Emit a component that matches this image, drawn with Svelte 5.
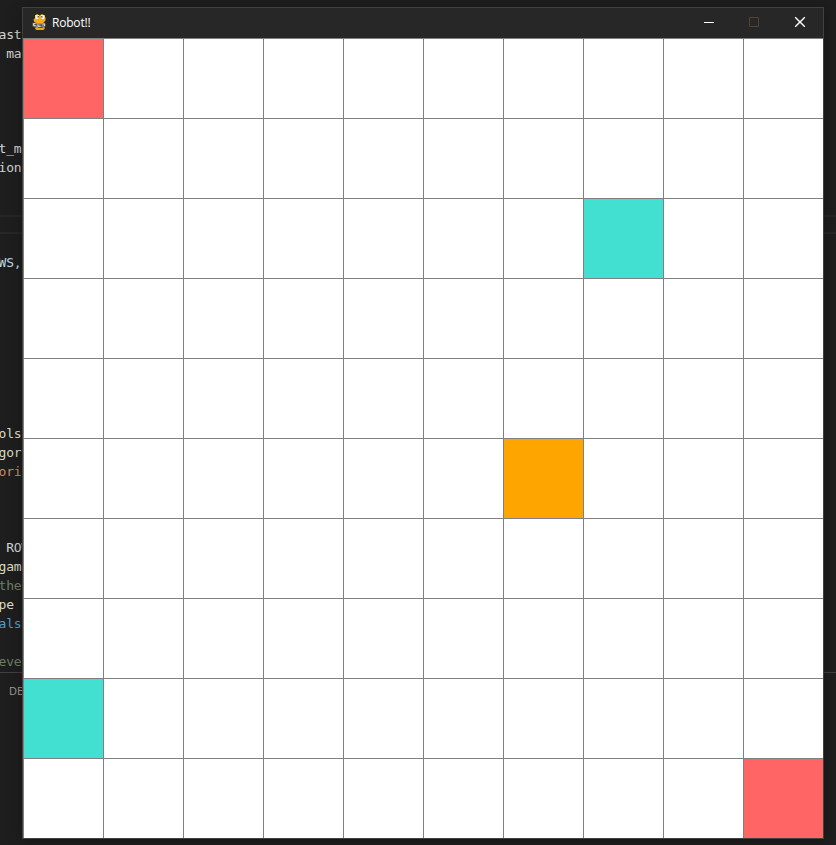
<script>
  const size = 10;
  const colors = { '0,0': '#ff6565', '9,9': '#ff6565', '2,7': '#41e0d0', '8,0': '#41e0d0', '5,6': '#ffa500' };
  const cells = Array.from({ length: size * size }, (_, i) => {
    const key = `${Math.floor(i / size)},${i % size}`;
    return { key, color: colors[key] ?? '#ffffff' };
  });
  const code = Array.from({ length: 34 }, () => ['', '']);
  const put = (row, text, kind = 'plain') => (code[row] = [text, kind]);
  put(0, 'ast');
  put(1, ' ma');
  put(6, 't_m');
  put(7, 'ion');
  put(12, 'WS,', 'name');
  put(21, 'ols', 'func');
  put(22, 'gor', 'func');
  put(23, 'ori', 'string');
  put(27, ' ROW');
  put(28, 'gam', 'func');
  put(29, 'the', 'comment');
  put(30, 'pe ', 'func');
  put(31, 'als', 'keyword');
  put(33, 'eve', 'comment');
</script>

<main class="desktop">
  <div class="band"></div>
  <div class="panel"><span>DE</span></div>
  <div class="code">
    {#each code as [text, kind]}
      <div class="line {kind}">{text}</div>
    {/each}
  </div>
  <section class="window">
    <header>
      <svg class="logo" width="16" height="17" viewBox="0 0 16 17">
        <path d="M3 8.500L0.500 9V12L3 13.500H12L13.500 12V9.500L11 8Z" fill="#7b7c74" />
        <path d="M3 1.500L5 0L7.500 1.500L10 0L12.500 1.500L13.500 4L13.500 6.500L11.500 8.500L10 9.500H5L2 7.500L1.500 5.500L3 4Z" fill="#f8ae14" />
        <path d="M3 14L5 13L7 14H10L12 13L13 14L11.500 16H4Z" fill="#eaa51a" />
        <path d="M3.500 1H7V4L6 5H4L3.500 4ZM9 1H12.500V4L12 5H10L9 4Z" fill="#eceee8" />
        <path d="M5.500 2H7V3.500H5.500ZM9 2h1.500v1.500H9z" fill="#62655e" />
        <path d="M3.500 9.500H1.500V11.500H3.500M6 10.500V12.500H8.500M10.500 10H12.500V12" fill="none" stroke="#cfd0c8" />
        <path d="M3 10h2v1H3zM8.500 10.500H10V12H8.500z" fill="#4c4e48" />
      </svg>
      <span class="title">Robot!!</span>
      <div class="controls">
        <svg width="46" height="30" viewBox="0 0 46 30" shape-rendering="crispEdges"><path d="M19 14h10v1H19z" fill="#fff" /></svg>
        <svg width="46" height="30" viewBox="0 0 46 30"><path d="M18.500 9.500h9v9h-9z" fill="none" stroke="#524334" /></svg>
        <svg width="46" height="30" viewBox="0 0 46 30"><path d="M18.200 9.200l9.600 9.600M27.800 9.200l-9.600 9.600" fill="none" stroke="#fff" stroke-width="1.400" /></svg>
      </div>
    </header>
    <div class="grid">
      {#each cells as cell (cell.key)}
        <div class="cell" style="background-color: {cell.color}"></div>
      {/each}
    </div>
  </section>
</main>

<style>
  :global(body) { margin: 0; background: #1e1e1e; }
  .desktop {
    position: relative;
    box-sizing: border-box;
    width: 836px;
    height: 845px;
    padding: 7px 0 0 22px;
    overflow: hidden;
    background: #1e1e1e;
  }
  .band {
    position: absolute;
    top: 215px;
    left: 0;
    width: 100%;
    height: 15px;
    border-top: 2px solid #282727;
    border-bottom: 2px solid #282727;
  }
  .panel {
    position: absolute;
    top: 672px;
    left: 0;
    width: 100%;
    height: 172px;
    border-top: 1px solid #414141;
    border-bottom: 1px solid #171012;
    font: 11px/35px 'Open Sans', sans-serif;
    color: #a39e9a;
  }
  .panel span { padding-left: 9px; }
  .code {
    position: absolute;
    top: 25px;
    left: -1.5px;
    font: 13px/19px 'DejaVu Sans Mono', monospace;
    letter-spacing: -0.2px;
    white-space: pre;
    color: #d4d4d4;
  }
  .line { height: 19px; }
  .name { color: #b8dbe8; }
  .func { color: #dcdcc4; }
  .string { color: #c88c6e; }
  .comment { color: #6a8066; }
  .keyword { color: #519bca; }
  .window {
    position: relative;
    width: 800px;
    border: 1px solid #414141;
    box-shadow: 0 2px 14px rgba(0, 0, 0, 0.3);
  }
  header {
    display: flex;
    height: 30px;
    background: #272727;
  }
  .logo { margin: 6px 4px 0 9px; }
  .title {
    font: 12px/29px 'Open Sans', sans-serif;
    letter-spacing: -0.2px;
    color: #fff;
  }
  .controls { display: flex; margin-left: auto; }
  .grid {
    display: grid;
    grid-template-columns: repeat(10, 80px);
    grid-auto-rows: 80px;
  }
  .cell {
    border-top: 1px solid #808080;
    border-left: 1px solid #808080;
  }
</style>
